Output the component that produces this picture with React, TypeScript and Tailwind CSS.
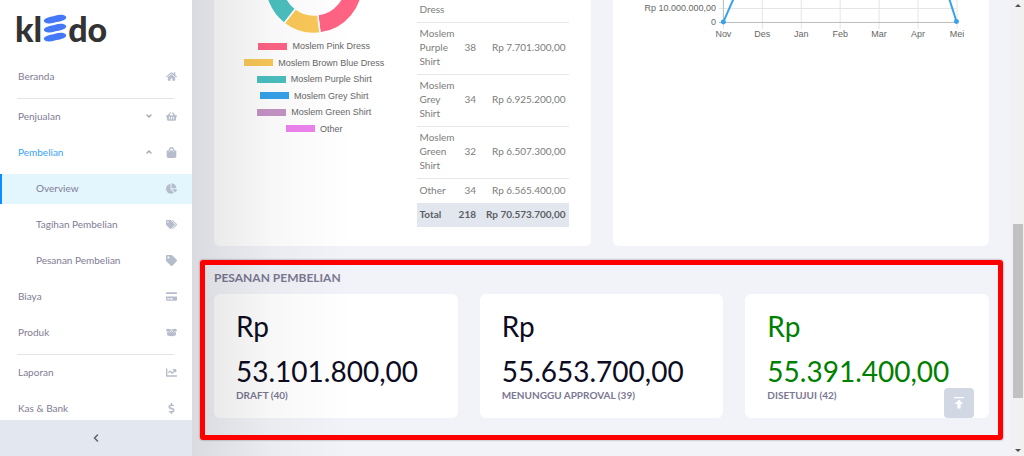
import type { IconType } from "react-icons"
import {
  FaHome,
  FaShoppingBasket,
  FaShoppingBag,
  FaChartPie,
  FaTags,
  FaTag,
  FaCreditCard,
  FaBoxOpen,
  FaChartLine,
  FaDollarSign,
} from "react-icons/fa"
import { ChevronDown, ChevronUp, ChevronLeft } from "lucide-react"

type MenuItem = {
  label: string
  icon: IconType
  child?: boolean
  active?: boolean
  open?: boolean
  arrow?: "up" | "down"
  divider?: boolean
}

const menu: MenuItem[] = [
  { label: "Beranda", icon: FaHome, divider: true },
  { label: "Penjualan", icon: FaShoppingBasket, arrow: "down" },
  { label: "Pembelian", icon: FaShoppingBag, arrow: "up", open: true },
  { label: "Overview", icon: FaChartPie, child: true, active: true },
  { label: "Tagihan Pembelian", icon: FaTags, child: true },
  { label: "Pesanan Pembelian", icon: FaTag, child: true },
  { label: "Biaya", icon: FaCreditCard },
  { label: "Produk", icon: FaBoxOpen, divider: true },
  { label: "Laporan", icon: FaChartLine },
  { label: "Kas & Bank", icon: FaDollarSign },
]

const legend = [
  { label: "Moslem Pink Dress", color: "bg-[#ff6384]" },
  { label: "Moslem Brown Blue Dress", color: "bg-[#fac858]" },
  { label: "Moslem Purple Shirt", color: "bg-[#4bc0c0]" },
  { label: "Moslem Grey Shirt", color: "bg-[#36a2eb]" },
  { label: "Moslem Green Shirt", color: "bg-[#c594c5]" },
  { label: "Other", color: "bg-[#ee82ee]" },
]

const products = [
  { name: "Dress", qty: "", total: "" },
  { name: "Moslem Purple Shirt", qty: "38", total: "Rp 7.701.300,00" },
  { name: "Moslem Grey Shirt", qty: "34", total: "Rp 6.925.200,00" },
  { name: "Moslem Green Shirt", qty: "32", total: "Rp 6.507.300,00" },
  { name: "Other", qty: "34", total: "Rp 6.565.400,00" },
]

const orders = [
  { amount: "53.101.800,00", label: "DRAFT (40)", color: "text-[#0d0c22]" },
  { amount: "55.653.700,00", label: "MENUNGGU APPROVAL (39)", color: "text-[#0d0c22]" },
  { amount: "55.391.400,00", label: "DISETUJUI (42)", color: "text-[#008000]" },
]

const months = ["Nov", "Des", "Jan", "Feb", "Mar", "Apr", "Mei"]

const Logo = () => {
  return (
    <a href="#" aria-label="kledo" className="flex h-[59px] shrink-0 items-start pl-[15px] pt-[9px] font-['Lato',sans-serif] text-[34px] font-black leading-10 text-[#333]">
      kl
      <svg viewBox="0 0 24 28" className="ml-px mt-[5px] h-7 w-6" fill="#4478f6">
        <path d="M1 6C3.500 2.800 8 3 12 1.700c3.500-1.200 8-1.500 10.500 .2 1 .8.900 2-.1 3C19 7.800 15 7.300 11 8.700 7.500 9.800 4 9.600 2 8.400 .9 7.700 .4 6.900 1 6z" />
        <path d="M1 15C3.500 11.800 8 12 12 10.700c3.500-1.200 8-1.500 10.500 .2 1 .8.900 2-.1 3C19 16.800 15 16.300 11 17.700 7.500 18.800 4 18.600 2 17.400 .9 16.700 .4 15.900 1 15z" />
        <path d="M1 24C3.500 20.800 8 21 12 19.700c3.500-1.200 8-1.500 10.500 .2 1 .8.900 2-.1 3C19 25.800 15 25.300 11 26.700 7.500 27.800 4 27.600 2 26.400 .9 25.700 .4 24.900 1 24z" />
      </svg>
      <span className="pl-px">do</span>
    </a>
  )
}

const Sidebar = () => {
  return (
    <aside className="relative z-20 flex w-48 shrink-0 flex-col bg-white">
      <Logo />
      <nav className="min-h-0 flex-1 overflow-hidden">
        {menu.map((item) => {
          const Icon = item.icon
          return (
            <div key={item.label}>
              <div className="py-[3px]">
                <a
                  href="#"
                  className={`flex h-[30px] items-center border-l-2 pb-[2px] pr-[15px] text-[10px] ${item.child ? "pl-[34px]" : "pl-4"} ${
                    item.active ? "border-[#0a8dff] bg-[#e3f6fe]" : "border-transparent"
                  } ${item.open ? "text-[#36a3f7]" : "text-[#7f7b94]"}`}
                >
                  <span className="flex-1">{item.label}</span>
                  {item.arrow === "down" && <ChevronDown className="mr-3 text-[#a0a5b2]" size={8} strokeWidth={4} />}
                  {item.arrow === "up" && <ChevronUp className="mr-3 text-[#a0a5b2]" size={8} strokeWidth={4} />}
                  <span className="flex w-3 justify-end">
                    <Icon className="shrink-0 text-[#b5bccb]" size={11} />
                  </span>
                </a>
              </div>
              {item.divider && <hr className="ml-[17px] mr-[18px] mt-[3px] border-[#e4e4e8]" />}
            </div>
          )
        })}
      </nav>
      <button type="button" aria-label="Collapse" className="flex h-9 shrink-0 items-center justify-center bg-[#e2e7f0] text-[#5f6073]">
        <ChevronLeft size={12} strokeWidth={3} />
      </button>
    </aside>
  )
}

const ProductChart = () => {
  return (
    <div className="flex flex-1 flex-col items-center pr-6">
      <svg viewBox="0 0 100 34" className="h-[34px] w-[100px]" stroke="#fff" strokeWidth="1.500">
        <path d="M50 -64.500A49 49 0 0 1 56 33.100L53.700 14.800A30.500 30.500 0 0 0 50 -46z" fill="#ff6384" />
        <path d="M56 33.100A49 49 0 0 1 20.100 23.300L31.400 8.700A30.500 30.500 0 0 0 53.700 14.800z" fill="#fac858" />
        <path d="M20.100 23.300A49 49 0 0 1 1.500 -22L19.800 -20A30.500 30.500 0 0 0 31.400 8.700z" fill="#4bc0c0" />
      </svg>
      <ul className="mt-[6px] flex h-[95px] flex-col items-center justify-between font-['Liberation_Sans',Arial,sans-serif] text-[9px] leading-3 text-[#666]">
        {legend.map((item) => (
          <li key={item.label} className="flex items-center gap-[5px] whitespace-nowrap">
            <span className={`h-[7px] w-[29px] ${item.color}`} />
            {item.label}
          </li>
        ))}
      </ul>
    </div>
  )
}

const ProductTable = () => {
  return (
    <table className="w-[152px] self-start text-[10px] leading-[14px] text-[#7d7d7d]">
      <tbody>
        {products.map((row, i) => (
          <tr key={row.name} className={i < products.length - 1 ? "border-b border-[#e6e7ea]" : ""}>
            <td className={`w-10 pl-[3px] ${i === 0 ? "pb-[6px] pt-[2px]" : i === products.length - 1 ? "pb-[6px] pt-1" : "pb-[6px] pt-[3px]"}`}>{row.name}</td>
            <td className="pb-[6px] pt-[3px] text-right">{row.qty}</td>
            <td className="whitespace-nowrap pb-[6px] pr-[3px] pt-[3px] text-right">{row.total}</td>
          </tr>
        ))}
      </tbody>
      <tfoot>
        <tr className="bg-[#e2e7ef] font-bold text-[#5c5d63]">
          <td className="pb-[6px] pl-[3px] pt-1">Total</td>
          <td className="pb-[6px] pt-1 text-right">218</td>
          <td className="whitespace-nowrap pb-[6px] pr-[3px] pt-1 text-right">Rp 70.573.700,00</td>
        </tr>
      </tfoot>
    </table>
  )
}

const PurchaseChart = () => {
  return (
    <svg viewBox="0 0 333 44" className="w-full font-['Liberation_Sans',Arial,sans-serif] text-[9px]" fill="#666">
      <g stroke="#e5e5e5">
        <path d="M84 8.500H322" />
        {months.map((m, i) => (
          <path key={m} d={`M${88.5 + i * 39} 0V29`} />
        ))}
      </g>
      <path d="M88.500 0V22M84 22.500H322" stroke="#bdbdbd" fill="none" />
      <path d="M88.500 22L99 -2M314.500 -2L322 21.500" stroke="#36a2eb" strokeWidth="2" fill="none" />
      <circle cx="88.500" cy="22" r="2.500" fill="#36a2eb" />
      <circle cx="322" cy="21.500" r="2.500" fill="#36a2eb" />
      <text x="81" y="11" textAnchor="end">Rp 10.000.000,00</text>
      <text x="81" y="25" textAnchor="end">0</text>
      {months.map((m, i) => (
        <text key={m} x={88.5 + i * 39} y="37" textAnchor="middle">{m}</text>
      ))}
    </svg>
  )
}

const Orders = () => {
  return (
    <section className="relative mt-[14px] pb-[22px] pt-[11px]">
      <h2 className="text-xs font-bold leading-[14px] text-[#7b7893]">PESANAN PEMBELIAN</h2>
      <div className="mt-[9px] grid grid-cols-3 gap-[22px]">
        {orders.map((order) => (
          <div key={order.label} className="rounded-md bg-white px-[22px] pb-4 pt-[11px]">
            <div className={`text-[28px] ${order.color}`}>
              <p className="leading-[42px]">Rp</p>
              <p className="mt-2 leading-8">{order.amount}</p>
            </div>
            <p className="mt-px text-[10px] font-bold leading-[14px] text-[#7b7893]">{order.label}</p>
          </div>
        ))}
      </div>
      <div className="pointer-events-none absolute -inset-x-[14px] inset-y-0 z-20 rounded-[3px] border-[5px] border-[#fe0000] shadow-[0_0_2px_rgba(0,0,0,0.5)]" />
    </section>
  )
}

const ScrollBar = () => {
  return (
    <div aria-hidden="true" className="flex w-[13px] shrink-0 flex-col items-center justify-between bg-[#f1f1f1] py-1">
      <span className="border-x-[3px] border-b-[3px] border-x-transparent border-b-[#505050]" />
      <span className="mt-[166px] h-[174px] w-[10px] bg-[#c1c1c1]" />
      <span className="border-x-[3px] border-t-[3px] border-x-transparent border-t-[#505050]" />
    </div>
  )
}

const App = () => {
  return (
    <div className="flex h-screen overflow-hidden bg-[#f2f3f8] font-['Lato',sans-serif]">
      <Sidebar />
      <main className="relative min-w-0 flex-1 px-[22px]">
        <div className="grid grid-cols-2 gap-[22px]">
          <div className="flex rounded-b-md bg-white px-[22px] pb-[19px]">
            <ProductChart />
            <ProductTable />
          </div>
          <div className="rounded-b-md bg-white px-[22px]">
            <PurchaseChart />
          </div>
        </div>
        <Orders />
        {/* sidebar shadow */}
        <div className="pointer-events-none absolute inset-y-0 left-0 z-10 w-40 bg-linear-to-r from-black/10 via-black/3 to-transparent" />
        <button type="button" aria-label="Back to top" className="absolute bottom-[38px] right-[37px] z-10 flex size-[30px] items-center justify-center rounded bg-[#d1d8e4]">
          <svg viewBox="0 0 12 14" className="h-[14px] w-3" fill="#fff">
            <path d="M1 1h10v1.300H1zM6 3.600l4.200 4.400H7.600v4.600H4.400V8H1.800z" />
          </svg>
        </button>
      </main>
      <ScrollBar />
    </div>
  )
}

export default App
